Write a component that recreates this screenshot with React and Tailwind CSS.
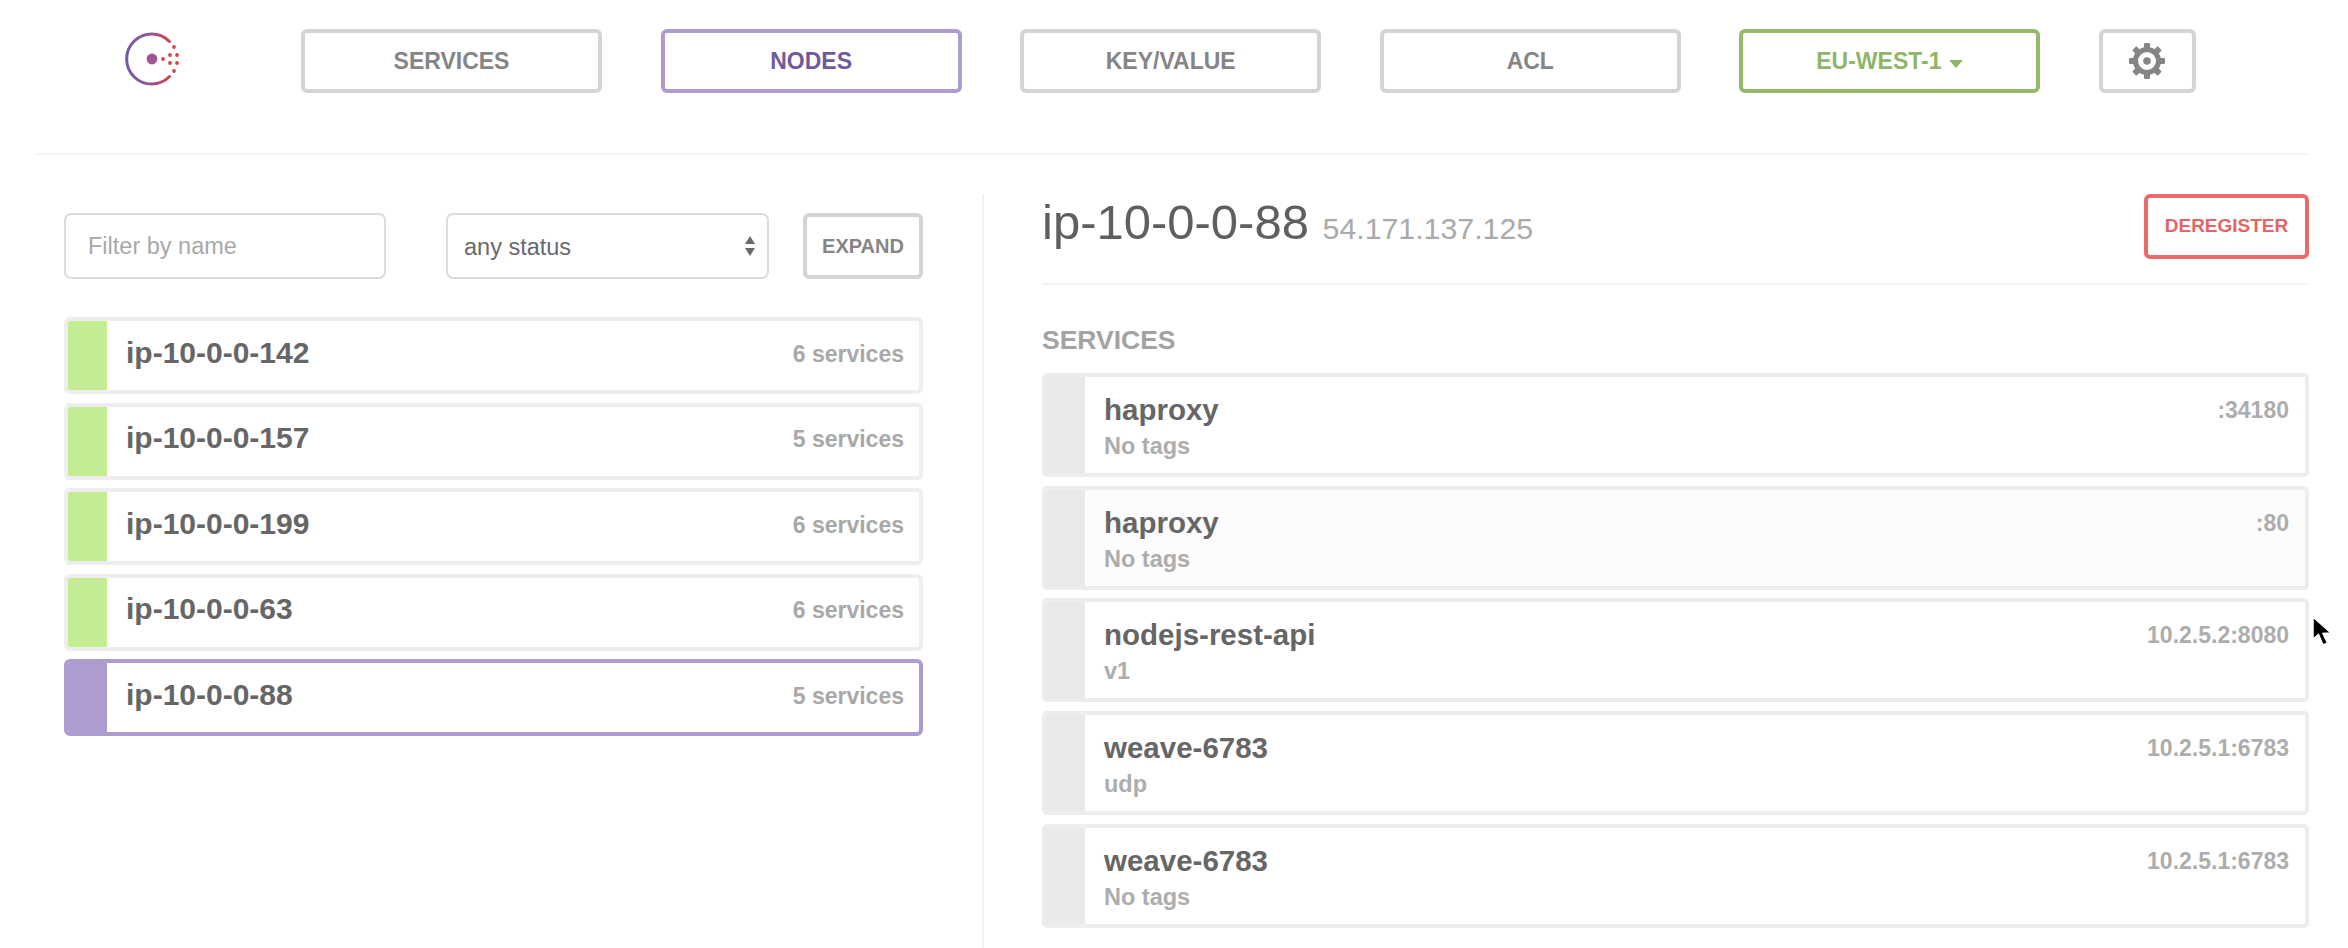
const NODES = [
  { name: "ip-10-0-0-142", count: "6 services" },
  { name: "ip-10-0-0-157", count: "5 services" },
  { name: "ip-10-0-0-199", count: "6 services" },
  { name: "ip-10-0-0-63", count: "6 services" },
  { name: "ip-10-0-0-88", count: "5 services", active: true },
];

const SERVICES = [
  { name: "haproxy", tags: "No tags", port: ":34180" },
  { name: "haproxy", tags: "No tags", port: ":80", hover: true },
  { name: "nodejs-rest-api", tags: "v1", port: "10.2.5.2:8080" },
  { name: "weave-6783", tags: "udp", port: "10.2.5.1:6783" },
  { name: "weave-6783", tags: "No tags", port: "10.2.5.1:6783" },
];

function Logo() {
  return (
    <svg width="60" height="60" viewBox="0 0 60 60" className="block">
      <defs>
        <linearGradient id="consul" x1="0" y1="0" x2="1" y2="0">
          <stop offset="0" stopColor="#7358a8" />
          <stop offset="0.45" stopColor="#8a5a9c" />
          <stop offset="1" stopColor="#d0434f" />
        </linearGradient>
      </defs>
      <path d="M 47.5 12.5 A 25 25 0 1 0 47.5 47.5" fill="none" stroke="url(#consul)" strokeWidth="3" strokeLinecap="round" />
      <circle cx="30" cy="30" r="5.4" fill="#a05590" />
      <g fill="#d0434f">
        <circle cx="41" cy="30" r="1.9" />
        <circle cx="48" cy="26" r="1.9" />
        <circle cx="48" cy="34" r="1.9" />
        <circle cx="55" cy="26" r="1.9" />
        <circle cx="55" cy="34" r="1.9" />
        <circle cx="52" cy="18" r="1.9" />
        <circle cx="52" cy="42" r="1.9" />
      </g>
    </svg>
  );
}

function Gear() {
  return (
    <svg width="38" height="38" viewBox="0 0 38 38" className="block">
      <g fill="#858585">
        {[0, 45, 90, 135, 180, 225, 270, 315].map((a) => (
          <rect key={a} x="16" y="1" width="6" height="7" rx="1" transform={`rotate(${a} 19 19)`} />
        ))}
      </g>
      <circle cx="19" cy="19" r="11.5" fill="none" stroke="#858585" strokeWidth="5" />
      <circle cx="19" cy="19" r="3.8" fill="#858585" />
    </svg>
  );
}

function NavButton({ children, color = "border-[#d4d4d4] text-[#858585]", width = "w-[301px]" }) {
  return (
    <button className={`${width} h-[64px] rounded-[6px] border-[4px] bg-white text-[23px] font-bold flex items-center justify-center ${color}`}>
      {children}
    </button>
  );
}

function NodeRow({ node }) {
  const border = node.active ? "border-[#ae9cd1]" : "border-[#eeeeee]";
  const bar = node.active ? "bg-[#ae9cd1]" : "bg-[#c4ec92]";
  return (
    <div className={`h-[77px] rounded-[6px] border-[4px] flex items-center overflow-hidden ${border}`}>
      <div className={`w-[39px] h-full shrink-0 ${bar}`} />
      <div className="flex-1 flex items-center justify-between pl-[19px] pr-[15px] pb-[4px]">
        <span className="text-[30px] leading-[36px] font-bold text-[#666666] -translate-y-px">{node.name}</span>
        <span className="text-[23px] leading-[36px] font-bold text-[#a8a8a8]">{node.count}</span>
      </div>
    </div>
  );
}

function ServiceRow({ svc }) {
  return (
    <div className={`h-[104px] rounded-[5px] border-[4px] border-[#ededed] flex overflow-hidden ${svc.hover ? "bg-[#fcfcfc]" : "bg-white"}`}>
      <div className="w-[39px] h-full shrink-0 bg-[#e9e9e9]" />
      <div className="flex-1 flex justify-between pl-[19px] pr-[16px] pt-[15px]">
        <div>
          <div className="text-[29.5px] leading-[36px] font-bold text-[#666666]">{svc.name}</div>
          <div className="text-[23.5px] leading-[36px] font-bold text-[#adadad]">{svc.tags}</div>
        </div>
        <div className="text-[23px] leading-[36px] font-bold text-[#adadad]">{svc.port}</div>
      </div>
    </div>
  );
}

export default function App() {
  return (
    <div className="relative h-[948px] overflow-hidden bg-white font-['Liberation_Sans',Arial,sans-serif]">
      <header className="ml-[35px] mr-[39px] h-[155px] border-b-[2px] border-[#f3f3f3] flex pt-[29px]">
        <div className="w-[266px] shrink-0 pl-[87px]">
          <Logo />
        </div>
        <nav className="flex gap-[58.6px]">
          <NavButton>SERVICES</NavButton>
          <NavButton color="border-[#ae9cd1] text-[#6f5a9e]">NODES</NavButton>
          <NavButton>KEY/VALUE</NavButton>
          <NavButton>ACL</NavButton>
          <NavButton color="border-[#96b96b] text-[#8fb568]">
            EU-WEST-1
            <span className="ml-[8px] mt-[5px] w-0 h-0 border-x-[7px] border-t-[8px] border-x-transparent border-t-[#8fb568]" />
          </NavButton>
          <NavButton width="w-[97px]"><Gear /></NavButton>
        </nav>
      </header>

      <main className="flex ml-[35px] mr-[39px]">
        <section className="w-[947px] shrink-0 pl-[29px] pr-[59px] pt-[58px]">
          <div className="flex items-center">
            <input
              placeholder="Filter by name"
              className="w-[322px] h-[66px] rounded-[7px] border-[2px] border-[#dcdcdc] px-[22px] text-[23.5px] text-[#5f5f5f] placeholder:text-[#a9a9a9]"
            />
            <div className="ml-[60px] w-[323px] h-[66px] rounded-[7px] border-[2px] border-[#dcdcdc] pl-[16px] pr-[11px] flex items-center justify-between text-[23.5px] leading-[36px] text-[#6a6a6a]">
              <span className="translate-y-px">any status</span>
              <svg width="12" height="24" viewBox="0 0 12 24" className="block">
                <path d="M6 2 L11 10 L1 10 Z" fill="#6a6a6a" />
                <path d="M6 22 L11 14 L1 14 Z" fill="#6a6a6a" />
              </svg>
            </div>
            <button className="ml-[34px] w-[120px] h-[66px] rounded-[6px] border-[4px] border-[#d4d4d4] text-[20px] font-bold text-[#858585]">EXPAND</button>
          </div>
          <div className="mt-[38px] flex flex-col gap-[8.5px]">
            {NODES.map((n) => <NodeRow key={n.name} node={n} />)}
          </div>
        </section>

        <section className="flex-1 border-l-[2px] border-[#f3f3f3] mt-[39px] pl-[58px] h-[754px]">
          <div className="h-[91px] border-b-[2px] border-[#f3f3f3] flex items-start justify-between">
            <h1 className="text-[49px] leading-[56px] text-[#5f5f5f]">
              ip-10-0-0-88 <span className="text-[30.3px] text-[#aaaaaa]">54.171.137.125</span>
            </h1>
            <button className="w-[165px] h-[65px] rounded-[6px] border-[4px] border-[#ea6a6a] text-[19px] font-bold text-[#e46565]">DEREGISTER</button>
          </div>
          <h2 className="mt-[38px] text-[26.5px] leading-[34px] font-bold text-[#a3a3a3]">SERVICES</h2>
          <div className="mt-[16px] flex flex-col gap-[8.7px]">
            {SERVICES.map((s, i) => <ServiceRow key={i} svc={s} />)}
          </div>
        </section>
      </main>

      {/* mouse pointer caught in the shot */}
      <svg width="26" height="34" viewBox="0 0 26 34" className="absolute left-[2311px] top-[615px]">
        <path d="M2 2 L2 24 L7.5 19.5 L12 30 L16.5 28 L12 18.5 L20 18 Z" fill="#000" stroke="#fff" strokeWidth="1.5" />
      </svg>
    </div>
  );
}
